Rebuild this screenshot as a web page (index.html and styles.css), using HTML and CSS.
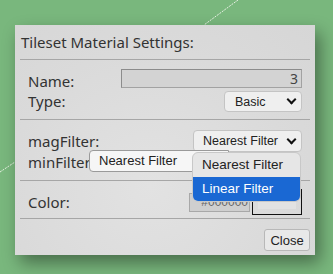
FILE: index.html
```html
<!DOCTYPE html>
<html lang="en">
<head>
    <meta charset="UTF-8">
    <meta name="viewport" content="width=device-width, initial-scale=1.0">
    <title>Tileset Material Settings</title>
    <link rel="stylesheet" href="styles.css">
</head>
<body>
    <svg class="scene-line" width="333" height="274">
        <line x1="238" y1="0" x2="204" y2="25" />
        <line x1="0" y1="172" x2="15" y2="162" />
    </svg>

    <div class="panel">
        <div class="panel-title">Tileset Material Settings:</div>

        <div class="section first">
            <div class="row name-row">
                <span class="label">Name:</span>
                <div class="text-field">3</div>
            </div>
            <div class="row">
                <span class="label">Type:</span>
                <div class="select basic">Basic <span class="chev"></span></div>
            </div>
        </div>

        <div class="section filters">
            <div class="row mag-row">
                <span class="label">magFilter:</span>
                <div class="select filter">Nearest Filter <span class="chev"></span></div>
            </div>
            <div class="row">
                <span class="label">minFilter:</span>
            </div>
            <div class="min-select">Nearest Filter</div>
            <div class="option-list">
                <div class="option">Nearest Filter</div>
                <div class="option active">Linear Filter</div>
            </div>
        </div>

        <div class="section color-section">
            <div class="row">
                <span class="label">Color:</span>
                <div class="color-controls">
                    <div class="hex-field">#000000</div>
                    <div class="swatch"><div class="swatch-fill"></div></div>
                </div>
            </div>
        </div>

        <div class="section footer">
            <button class="close-btn">Close</button>
        </div>
    </div>
</body>
</html>
```

FILE: styles.css
```css
body {
    margin: 0;
    width: 333px;
    height: 274px;
    overflow: hidden;
    background: #79b77d;
    font-family: "Noto Sans", "Open Sans", sans-serif;
    color: #333;
    position: relative;
}

.scene-line {
    position: absolute;
    left: 0;
    top: 0;
}

.scene-line line {
    stroke: #e6f0e2;
    stroke-width: 1;
    stroke-dasharray: 2 1;
}

.panel {
    position: relative;
    margin: 25px 0 0 15px;
    width: 300px;
    height: 230px;
    box-sizing: border-box;
    padding: 0 5px;
    background: radial-gradient(ellipse at 45% 70%, #e2e2e2 0%, #dadada 60%, #d6d6d6 100%);
    box-shadow: 5px 8px 16px rgba(0, 0, 0, 0.4);
}

.panel-title {
    font-size: 15px;
    line-height: 20px;
    padding: 7px 0 0 1px;
    height: 27px;
    border-bottom: 1px solid #a6a6a6;
}

.section {
    border-bottom: 1px solid #a6a6a6;
    padding: 0 8px;
    position: relative;
}

.row {
    display: flex;
    justify-content: space-between;
    align-items: center;
}

.label {
    font-size: 15px;
    line-height: 19px;
}

.first {
    padding-top: 9px;
    height: 50px;
}

.name-row {
    height: 19px;
    margin-bottom: 3px;
}

.name-row .label {
    padding-top: 6px;
}

.text-field {
    width: 181px;
    height: 19px;
    box-sizing: border-box;
    background: #d3d3d3;
    border: 1px solid #a2a2a2;
    border-top-color: #8c8c8c;
    border-left-color: #8c8c8c;
    text-align: right;
    padding-right: 3px;
    font-size: 14px;
    line-height: 17px;
    color: #444;
}

.select {
    box-sizing: border-box;
    background: #efefef;
    border: 1px solid #c4c4c4;
    border-radius: 4px;
    font-family: "Liberation Sans", Arial, sans-serif;
    font-size: 12.5px;
    color: #222;
    display: flex;
    align-items: center;
    justify-content: space-between;
    padding: 0 4px 0 10px;
}

.basic {
    width: 78px;
    height: 21px;
}

.filter {
    width: 109px;
    height: 22px;
    padding-left: 9px;
}

.chev {
    width: 5px;
    height: 5px;
    border-right: 2px solid #111;
    border-bottom: 2px solid #111;
    transform: rotate(45deg);
    margin: -4px 2px 0 0;
}

.filters {
    padding-top: 10px;
    height: 50px;
}

.mag-row {
    height: 22px;
    margin-bottom: 0;
}

.filters .row .label {
    line-height: 20px;
}

.min-select {
    position: absolute;
    left: 69px;
    top: 30px;
    width: 140px;
    height: 22px;
    box-sizing: border-box;
    background: #f6f6f6;
    border: 1px solid #9a9a9a;
    border-radius: 4px 0 0 4px;
    font-family: "Liberation Sans", Arial, sans-serif;
    font-size: 13px;
    line-height: 20px;
    padding-left: 9px;
    color: #222;
}

.option-list {
    position: absolute;
    left: 172px;
    top: 32px;
    width: 109px;
    box-sizing: border-box;
    background: #e6e6e6;
    border: 1px solid #c8c8c8;
    border-radius: 6px;
    overflow: hidden;
    z-index: 2;
}

.option {
    font-family: "Liberation Sans", Arial, sans-serif;
    font-size: 13.5px;
    height: 24px;
    line-height: 24px;
    padding-left: 9px;
    color: #222;
}

.option.active {
    background: #1a68d3;
    color: #fff;
}

.color-section {
    padding-top: 8px;
    height: 29px;
}

.color-section .row {
    height: 26px;
}

.color-controls {
    display: flex;
    align-items: center;
    gap: 2px;
}

.hex-field {
    width: 61px;
    height: 19px;
    box-sizing: border-box;
    background: #cfcfcf;
    border: 1px solid #a8a8a8;
    font-family: "Liberation Sans", Arial, sans-serif;
    font-size: 12px;
    line-height: 17px;
    text-align: right;
    padding-right: 1px;
    color: #666;
    overflow: hidden;
    white-space: nowrap;
}

.swatch {
    width: 50px;
    height: 26px;
    box-sizing: border-box;
    border: 1px solid #111;
    padding: 3px 5px 5px 5px;
}

.swatch-fill {
    height: 100%;
    background: #e2e2e2;
}

.footer {
    border-bottom: none;
    padding: 10px 0 0 0;
    display: flex;
    justify-content: flex-end;
}

.close-btn {
    width: 46px;
    height: 22px;
    font-family: "Liberation Sans", Arial, sans-serif;
    font-size: 13px;
    color: #222;
    background: #e8e8e8;
    border: 1px solid #b8b8b8;
    border-radius: 3px;
    padding: 0;
}
```
